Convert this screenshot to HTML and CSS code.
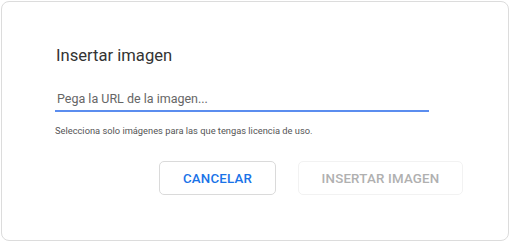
FILE: index.html
```html
<!DOCTYPE html>
<html lang="es">
<head>
    <meta charset="UTF-8">
    <title>Insertar imagen</title>
    <link rel="stylesheet" href="styles.css">
</head>
<body>
    <div class="dialogo">
        <h1>Insertar imagen</h1>
        <input type="text" class="campo-url" placeholder="Pega la URL de la imagen...">
        <p class="ayuda">Selecciona solo imágenes para las que tengas licencia de uso.</p>
        <div class="acciones">
            <button class="btn btn-cancelar">CANCELAR</button>
            <button class="btn btn-insertar" disabled>INSERTAR IMAGEN</button>
        </div>
    </div>
</body>
</html>
```

FILE: styles.css
```css
body {
    margin: 0;
    padding: 1px;
    background-color: #ffffff;
    font-family: Roboto, "Liberation Sans", sans-serif;
}

.dialogo {
    width: 508px;
    height: 240px;
    box-sizing: border-box;
    border: 1px solid #dcdcdc;
    border-radius: 8px;
    padding: 42px 45px 0 53px;
    background-color: #ffffff;
}

h1 {
    margin: 0 0 0 1px;
    font-size: 16.6px;
    font-weight: 400;
    line-height: 24px;
    color: #333333;
}

.campo-url {
    display: block;
    width: 374px;
    margin-top: 20px;
    padding: 3px 0 4px 2px;
    box-sizing: border-box;
    border: none;
    border-bottom: 2px solid #5b8def;
    font-family: inherit;
    font-size: 12.5px;
    line-height: 15px;
    color: #333333;
    outline: none;
}

.campo-url::placeholder {
    color: #666666;
}

.ayuda {
    margin: 13px 0 0 0;
    font-size: 9.3px;
    line-height: 12px;
    color: #555555;
}

.acciones {
    display: flex;
    justify-content: flex-end;
    gap: 22px;
    margin-top: 24px;
}

.btn {
    height: 34px;
    box-sizing: border-box;
    border-radius: 5px;
    background-color: #ffffff;
    font-family: inherit;
    font-size: 13.3px;
    font-weight: 500;
    letter-spacing: 0.2px;
}

.btn-cancelar {
    width: 117px;
    border: 1px solid #dadada;
    color: #1a73e8;
}

.btn-insertar {
    width: 165px;
    border: 1px solid #f2f2f2;
    color: #b0b0b0;
}
```
